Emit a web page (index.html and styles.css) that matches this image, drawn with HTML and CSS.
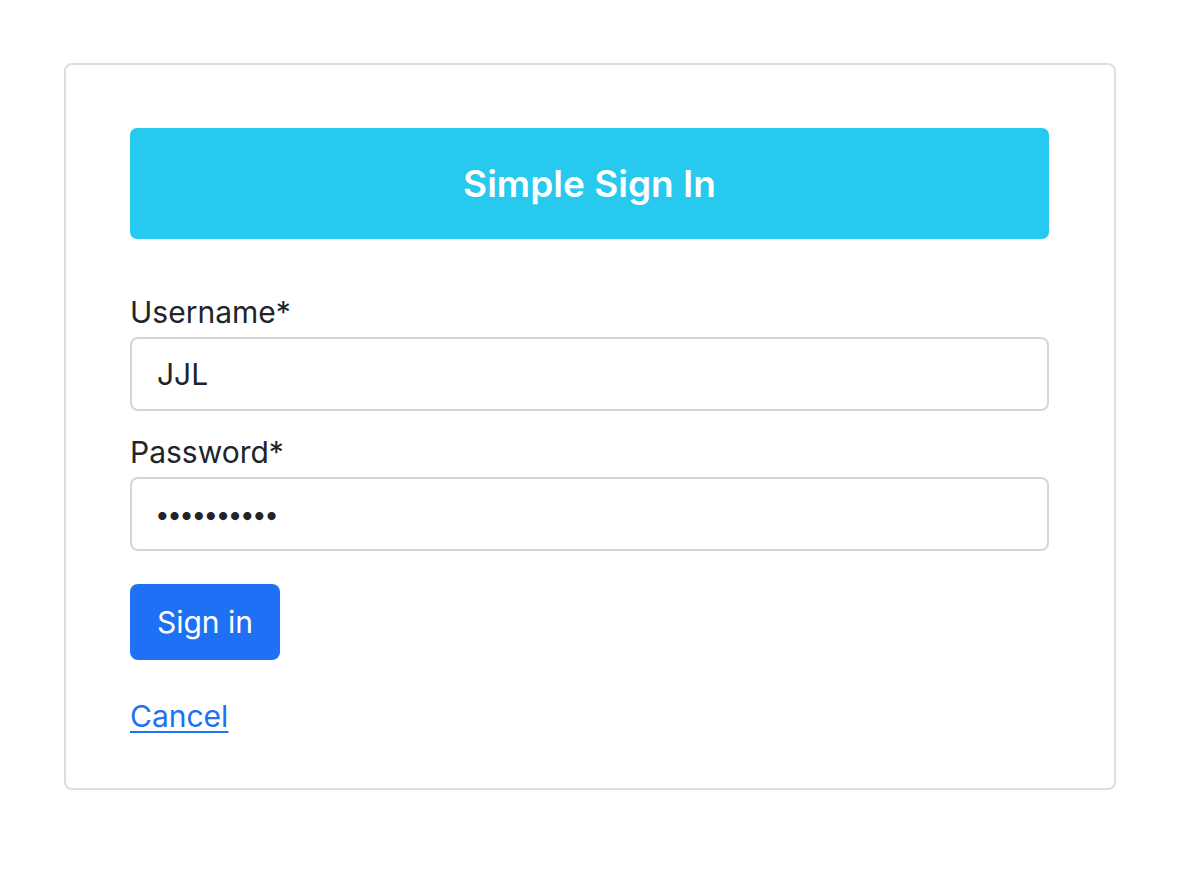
FILE: index.html
```html
<!DOCTYPE html>
<html lang="en">
<head>
<meta charset="utf-8">
<title>Simple Sign In</title>
<link rel="stylesheet" href="styles.css">
</head>
<body>
<div class="card">
  <div class="card-header">Simple Sign In</div>
  <form class="form">
    <label class="label" for="username">Username*</label>
    <input class="control" id="username" type="text" value="JJL">
    <label class="label label-2" for="password">Password*</label>
    <input class="control control-pw" id="password" type="password" value="abcdefghij">
    <button class="btn" type="button">Sign in</button>
    <a class="cancel" href="#">Cancel</a>
  </form>
</div>
</body>
</html>
```
FILE: styles.css
```css
html, body {
  margin: 0;
  padding: 0;
  background: #ffffff;
}
body {
  font-family: Inter, "Liberation Sans", sans-serif;
  color: #212529;
  padding: 63px 0 0 64px;
}
.card {
  width: 1052px;
  box-sizing: border-box;
  border: 2px solid #dedede;
  border-radius: 8px;
  padding: 63px 65px 49px 64px;
}
.card-header {
  height: 111px;
  background: #28c9ee;
  border-radius: 7px;
  color: #ffffff;
  font-size: 37px;
  font-weight: 600;
  display: flex;
  align-items: center;
  justify-content: center;
  margin-bottom: 51px;
}
.form {
  display: flex;
  flex-direction: column;
  align-items: flex-start;
}
.label {
  font-size: 30px;
  line-height: 45px;
  margin-bottom: 2px;
}
.label-2 {
  margin-top: 19px;
}
.control {
  width: 100%;
  height: 74px;
  box-sizing: border-box;
  border: 2px solid #d3d6da;
  border-radius: 8px;
  padding: 0 25px;
  font-family: inherit;
  font-size: 30px;
  color: #212529;
  outline: none;
  background: #fff;
}
.control-pw {
  padding-left: 23px;
  letter-spacing: -2.5px;
  font-size: 26px;
}
.btn {
  margin-top: 33px;
  height: 76px;
  width: 150px;
  border: none;
  border-radius: 8px;
  background: #1e70f5;
  color: #ffffff;
  font-family: inherit;
  font-size: 30px;
  padding: 0;
}
.cancel {
  margin-top: 34px;
  font-size: 30px;
  line-height: 45px;
  color: #1e70f5;
  text-decoration: underline;
  text-underline-offset: 4px;
  text-decoration-thickness: 2px;
}
```
